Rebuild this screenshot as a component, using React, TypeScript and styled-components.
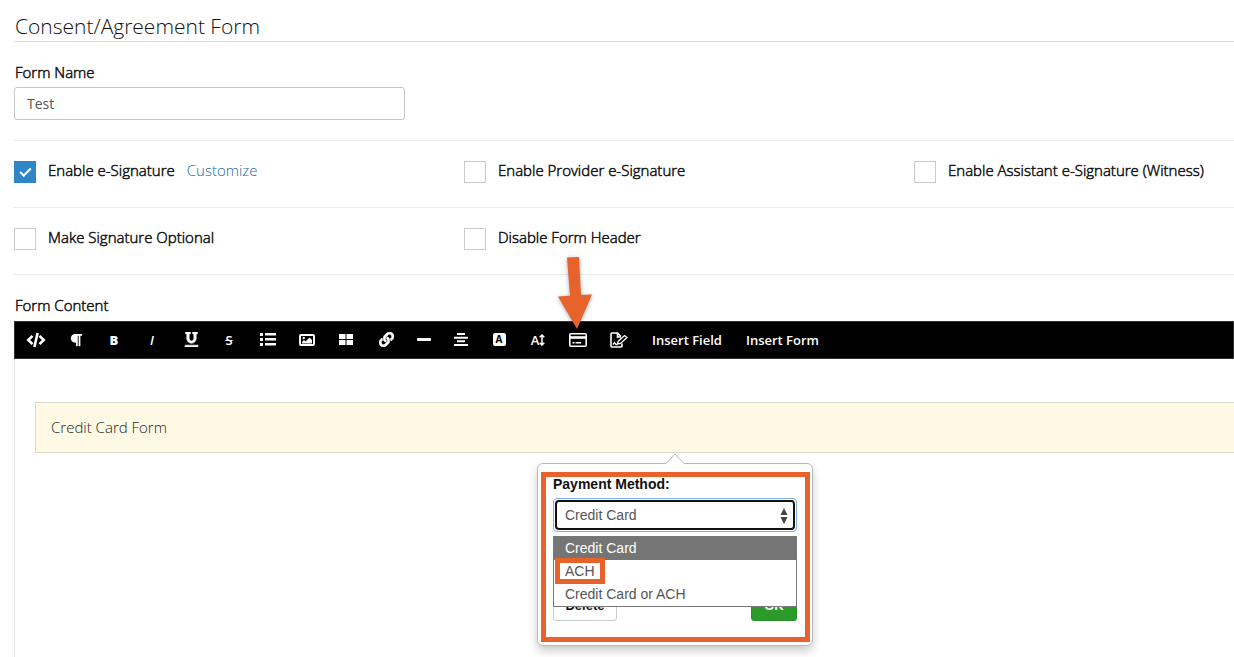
import React from "react";
import styled, { createGlobalStyle } from "styled-components";
import { FaLink, FaParagraph, FaUnderline } from "react-icons/fa";

const orange = "#e8622c";

const GlobalStyle = createGlobalStyle`
  *, *::before, *::after { box-sizing: border-box; }
  html { overflow: hidden; }
  body {
    margin: 0;
    background: #fff;
    color: #111;
    font: 350 15px/20px "Open Sans", sans-serif;
  }
`;

const Page = styled.main`
  display: flex;
  flex-direction: column;
  min-height: 100vh;
  padding: 12px 0 0 14px;
`;

const Title = styled.h1`
  margin: 0;
  padding-left: 1px;
  height: 30px;
  border-bottom: 1px solid #ddd;
  color: #111;
  font-size: 21px;
  font-weight: 350;
  line-height: 29px;
`;

const NameField = styled.div`
  display: flex;
  flex-direction: column;
  align-items: flex-start;
  gap: 5px;
  padding: 20px 0;
`;

const FieldLabel = styled.label`
  padding-left: 1px;
  -webkit-text-stroke: 0.5px #111;
`;

const TextInput = styled.input`
  width: 391px;
  max-width: 100%;
  height: 33px;
  padding: 0 12px;
  border: 1px solid #c6c6c6;
  border-radius: 3px;
  color: #555;
  font: 14px "Open Sans", sans-serif;
`;

const OptionRow = styled.div`
  display: grid;
  grid-template-columns: 450px 450px 1fr;
  align-items: center;
  height: 67px;
  padding-bottom: 5px;
  border-top: 1px solid #ececec;
`;

const Option = styled.div`
  display: flex;
  align-items: flex-start;
  gap: 12px;
  white-space: nowrap;
`;

const OptionLabel = styled.label`
  display: flex;
  align-items: flex-start;
  gap: 12px;
  -webkit-text-stroke: 0.5px #111;
`;

const Checkbox = styled.input`
  appearance: none;
  display: grid;
  place-content: center;
  width: 22px;
  height: 22px;
  margin: 1px 0 0;
  border: 1px solid #ccc;
  background: #fff;

  &:checked {
    border-color: #2e86c6;
    background: #2e86c6;
  }

  &:checked::before {
    content: "";
    width: 11px;
    height: 6px;
    margin-bottom: 2px;
    border: solid #fff;
    border-width: 0 0 2px 2px;
    transform: rotate(-45deg);
  }
`;

const Link = styled.a`
  color: #1a68a4;
  text-decoration: none;
`;

const ContentSection = styled.section`
  display: flex;
  flex: 1;
  flex-direction: column;
  padding-top: 20px;
  border-top: 1px solid #ececec;
`;

const ContentHeading = styled.h2`
  margin: 0 0 6px;
  padding-left: 1px;
  font-size: 15px;
  font-weight: 350;
  line-height: 20px;
  -webkit-text-stroke: 0.5px #111;
`;

const Toolbar = styled.div`
  display: flex;
  height: 38px;
  padding: 0 0 1px 1px;
  border: 1px solid #333;
  background: #000;
`;

const ToolButton = styled.button<{ $width?: number }>`
  position: relative;
  display: flex;
  align-items: center;
  justify-content: center;
  width: ${(p) => (p.$width ? `${p.$width}px` : "auto")};
  padding: 0 ${(p) => (p.$width ? 0 : 12)}px;
  border: 0;
  background: transparent;
  color: #fff;
  font: 600 13px "Open Sans", sans-serif;
  white-space: nowrap;
`;

const Italic = styled.i`
  font-weight: 600;
`;

const BoxedLetter = styled.span`
  width: 13px;
  height: 13px;
  border-radius: 2px;
  background: #fff;
  color: #000;
  font-size: 10px;
  font-weight: 700;
  line-height: 13px;
`;

const Pointer = styled.svg`
  position: absolute;
  z-index: 3;
  left: -4px;
  bottom: 27px;
  pointer-events: none;
  filter: drop-shadow(0 1px 2px rgba(0, 0, 0, 0.35));
`;

const Editor = styled.div`
  flex: 1;
  min-height: 290px;
  padding: 43px 0 0 20px;
  border-left: 1px solid #e4e4e4;
`;

const FormBlock = styled.div`
  position: relative;
  height: 51px;
  padding: 0 15px;
  border: 1px solid #ddd9c8;
  border-right: 0;
  background: #fef9e5;
  color: #222;
  line-height: 48px;
`;

const Popover = styled.div`
  position: absolute;
  top: 60px;
  left: 501px;
  width: 276px;
  height: 183px;
  padding: 10px 15px;
  border: 1px solid #b8b8b8;
  border-radius: 6px;
  background: #fff;
  box-shadow: 0 5px 10px rgba(0, 0, 0, 0.2);
  color: #111;
  font: 14px/20px "Liberation Sans", Arial, sans-serif;
`;

const PopoverTip = styled.svg`
  position: absolute;
  top: -11px;
  left: 127px;
`;

const Outline = styled.div`
  position: absolute;
  inset: 8px 2px 3px 3px;
  border: 5px solid ${orange};
  pointer-events: none;
`;

const MethodLabel = styled.label`
  display: block;
  font-size: 14px;
  font-weight: 700;
`;

const SelectFrame = styled.div`
  position: relative;
  margin-top: 4px;
  padding: 1px;
  border: 1px solid #7fb0e6;
  border-radius: 4px;
`;

const Select = styled.select`
  appearance: none;
  display: block;
  width: 100%;
  height: 30px;
  padding: 0 8px;
  border: 2px solid #111;
  border-radius: 4px;
  background: #fff;
  color: #555;
  font: 14px "Liberation Sans", Arial, sans-serif;
`;

const SelectArrows = styled.svg`
  position: absolute;
  top: 9px;
  right: 8px;
  pointer-events: none;
`;

const OptionList = styled.ul`
  position: absolute;
  z-index: 1;
  top: 72px;
  left: 15px;
  right: 15px;
  margin: 0;
  padding: 0;
  border: 1px solid #777;
  background: #fff;
  list-style: none;
`;

const OptionItem = styled.li<{ $selected?: boolean }>`
  height: 23px;
  padding-left: 11px;
  background: ${(p) => (p.$selected ? "#757575" : "#fff")};
  color: ${(p) => (p.$selected ? "#fff" : "#555")};
  line-height: 23px;
`;

const Marked = styled.span`
  position: relative;

  &::after {
    content: "";
    position: absolute;
    inset: -5px -10px;
    border: 5px solid ${orange};
  }
`;

const PopoverActions = styled.div`
  display: flex;
  justify-content: space-between;
  margin-top: 57px;
`;

const ActionButton = styled.button<{ $primary?: boolean }>`
  width: ${(p) => (p.$primary ? 46 : 64)}px;
  height: 32px;
  padding: 0;
  border: 1px solid ${(p) => (p.$primary ? "#279127" : "#ccc")};
  border-radius: 3px;
  background: ${(p) => (p.$primary ? "#2b9a2b" : "#fff")};
  color: ${(p) => (p.$primary ? "#fff" : "#111")};
  font: 700 13px "Liberation Sans", Arial, sans-serif;
`;

const CodeIcon = () => (
  <svg width="20" height="16" viewBox="0 0 20 16" fill="none" stroke="#fff" strokeWidth="2.6">
    <path d="M6.500 3.800 2.300 8l4.200 4.200M13.500 3.800 17.700 8l-4.200 4.200M11.600 1 8.400 15" />
  </svg>
);

const ListIcon = () => (
  <svg width="16" height="13" viewBox="0 0 16 13" fill="#fff">
    <path d="M0 0h3v3H0zM0 5h3v3H0zM0 10h3v3H0zM5 0h11v2.500H5zM5 5h11v2.500H5zM5 10h11v2.500H5z" />
  </svg>
);

const ImageIcon = () => (
  <svg width="16" height="12" viewBox="0 0 16 12" fill="#fff">
    <rect x="1" y="1" width="14" height="10" rx="1" fill="none" stroke="#fff" strokeWidth="1.9" />
    <circle cx="4.700" cy="4" r="1.200" />
    <path d="M3 9.500V8l2-2 1.600 1.500L10.500 3.500 13 6v3.500z" />
  </svg>
);

const TableIcon = () => (
  <svg width="14" height="11" viewBox="0 0 14 11" fill="#fff">
    <path d="M0 0h6.500v5H0zM7.500 0H14v5H7.500zM0 6h6.500v5H0zM7.500 6H14v5H7.500z" />
  </svg>
);

const RuleIcon = () => (
  <svg width="14" height="3" viewBox="0 0 14 3">
    <rect width="14" height="3" rx="1" fill="#fff" />
  </svg>
);

const AlignIcon = () => (
  <svg width="14" height="13" viewBox="0 0 14 13" fill="#fff">
    <path d="M3 0h8v2H3zM0 3.700h14v2H0zM3 7.300h8v2H3zM0 11h14v2H0z" />
  </svg>
);

const UpDownIcon = () => (
  <svg width="6" height="12" viewBox="0 0 6 12" fill="none" stroke="#fff" strokeWidth="1.5">
    <path d="M3 1v10M.7 3.300 3 1l2.300 2.300M.7 8.700 3 11l2.300-2.300" />
  </svg>
);

const CardIcon = () => (
  <svg width="18" height="14" viewBox="0 0 18 14" fill="none" stroke="#fff">
    <rect x=".8" y=".8" width="16.400" height="12.400" rx="1" strokeWidth="1.600" />
    <path d="M1 4.500h16" strokeWidth="2.600" />
    <path d="M3.500 9.800h2M6.500 9.800H12" strokeWidth="1.400" />
  </svg>
);

const SignIcon = () => (
  <svg width="18" height="16" viewBox="0 0 18 16" fill="none" stroke="#fff" strokeWidth="1.600">
    <path d="M12 11.500V14a1 1 0 0 1-1 1H2a1 1 0 0 1-1-1V2a1 1 0 0 1 1-1h5.500L11 4.500M7.500 1v4H11" />
    <path d="m8 9.500 6.500-6 2.500 2-6.500 6L7.500 12zM3 12.500l1.500-2 1.500 2h1.500" strokeWidth="1.300" />
  </svg>
);

interface Tool {
  label: string;
  width: number;
  content: React.ReactNode;
}

const tools: Tool[] = [
  { label: "Code view", width: 40, content: <CodeIcon /> },
  { label: "Paragraph format", width: 40, content: <FaParagraph size={14} /> },
  { label: "Bold", width: 36, content: <b>B</b> },
  { label: "Italic", width: 40, content: <Italic>I</Italic> },
  { label: "Underline", width: 38, content: <FaUnderline size={15} stroke="#fff" strokeWidth={20} /> },
  { label: "Strikethrough", width: 38, content: <s>S</s> },
  { label: "List", width: 40, content: <ListIcon /> },
  { label: "Image", width: 38, content: <ImageIcon /> },
  { label: "Table", width: 40, content: <TableIcon /> },
  { label: "Link", width: 40, content: <FaLink size={15} stroke="#fff" strokeWidth={20} /> },
  { label: "Horizontal rule", width: 36, content: <RuleIcon /> },
  { label: "Align", width: 38, content: <AlignIcon /> },
  { label: "Text color", width: 38, content: <BoxedLetter>A</BoxedLetter> },
  { label: "Font size", width: 40, content: <>A<UpDownIcon /></> },
  {
    label: "Payment form",
    width: 40,
    content: (
      <>
        <CardIcon />
        <Pointer width="44" height="78" viewBox="0 0 44 78">
          <path d="M13 5.500 25 5l2 38 11-.5L23 77 4 44.500l12-.8z" fill={orange} />
        </Pointer>
      </>
    ),
  },
  { label: "Signature", width: 42, content: <SignIcon /> },
];

interface CheckOptionProps {
  id: string;
  label: string;
  checked?: boolean;
  children?: React.ReactNode;
}

const CheckOption = ({ id, label, checked, children }: CheckOptionProps) => (
  <Option>
    <OptionLabel htmlFor={id}>
      <Checkbox id={id} type="checkbox" defaultChecked={checked} />
      {label}
    </OptionLabel>
    {children}
  </Option>
);

export default function App() {
  return (
    <>
      <GlobalStyle />
      <Page>
        <Title>Consent/Agreement Form</Title>
        <NameField>
          <FieldLabel htmlFor="form-name">Form Name</FieldLabel>
          <TextInput id="form-name" defaultValue="Test" />
        </NameField>
        <OptionRow>
          <CheckOption id="e-signature" label="Enable e-Signature" checked>
            <Link href="#customize">Customize</Link>
          </CheckOption>
          <CheckOption id="provider" label="Enable Provider e-Signature" />
          <CheckOption id="assistant" label="Enable Assistant e-Signature (Witness)" />
        </OptionRow>
        <OptionRow>
          <CheckOption id="optional" label="Make Signature Optional" />
          <CheckOption id="header" label="Disable Form Header" />
        </OptionRow>
        <ContentSection>
          <ContentHeading>Form Content</ContentHeading>
          <Toolbar role="toolbar" aria-label="Formatting">
            {tools.map((tool) => (
              <ToolButton key={tool.label} type="button" aria-label={tool.label} $width={tool.width}>
                {tool.content}
              </ToolButton>
            ))}
            <ToolButton type="button">Insert Field</ToolButton>
            <ToolButton type="button">Insert Form</ToolButton>
          </Toolbar>
          <Editor>
            <FormBlock>
              Credit Card Form
              <Popover>
                <PopoverTip width="20" height="12" viewBox="0 0 20 12">
                  <path d="M0 11 10 1l10 10v1H0z" fill="#fff" />
                  <path d="M0 10.500h1L10 1l9 9.500h1" fill="none" stroke="#b8b8b8" />
                </PopoverTip>
                <MethodLabel htmlFor="method">Payment Method:</MethodLabel>
                <SelectFrame>
                  <Select id="method" defaultValue="card">
                    <option value="card">Credit Card</option>
                    <option value="ach">ACH</option>
                    <option value="both">Credit Card or ACH</option>
                  </Select>
                  <SelectArrows width="8" height="16" viewBox="0 0 8 16" fill="#444">
                    <path d="M4 0l3.500 7h-7zM4 16 .5 9h7z" />
                  </SelectArrows>
                </SelectFrame>
                <OptionList aria-label="Payment methods">
                  <OptionItem $selected>Credit Card</OptionItem>
                  <OptionItem>
                    <Marked>ACH</Marked>
                  </OptionItem>
                  <OptionItem>Credit Card or ACH</OptionItem>
                </OptionList>
                <PopoverActions>
                  <ActionButton type="button">Delete</ActionButton>
                  <ActionButton type="button" $primary>OK</ActionButton>
                </PopoverActions>
                <Outline />
              </Popover>
            </FormBlock>
          </Editor>
        </ContentSection>
      </Page>
    </>
  );
}
